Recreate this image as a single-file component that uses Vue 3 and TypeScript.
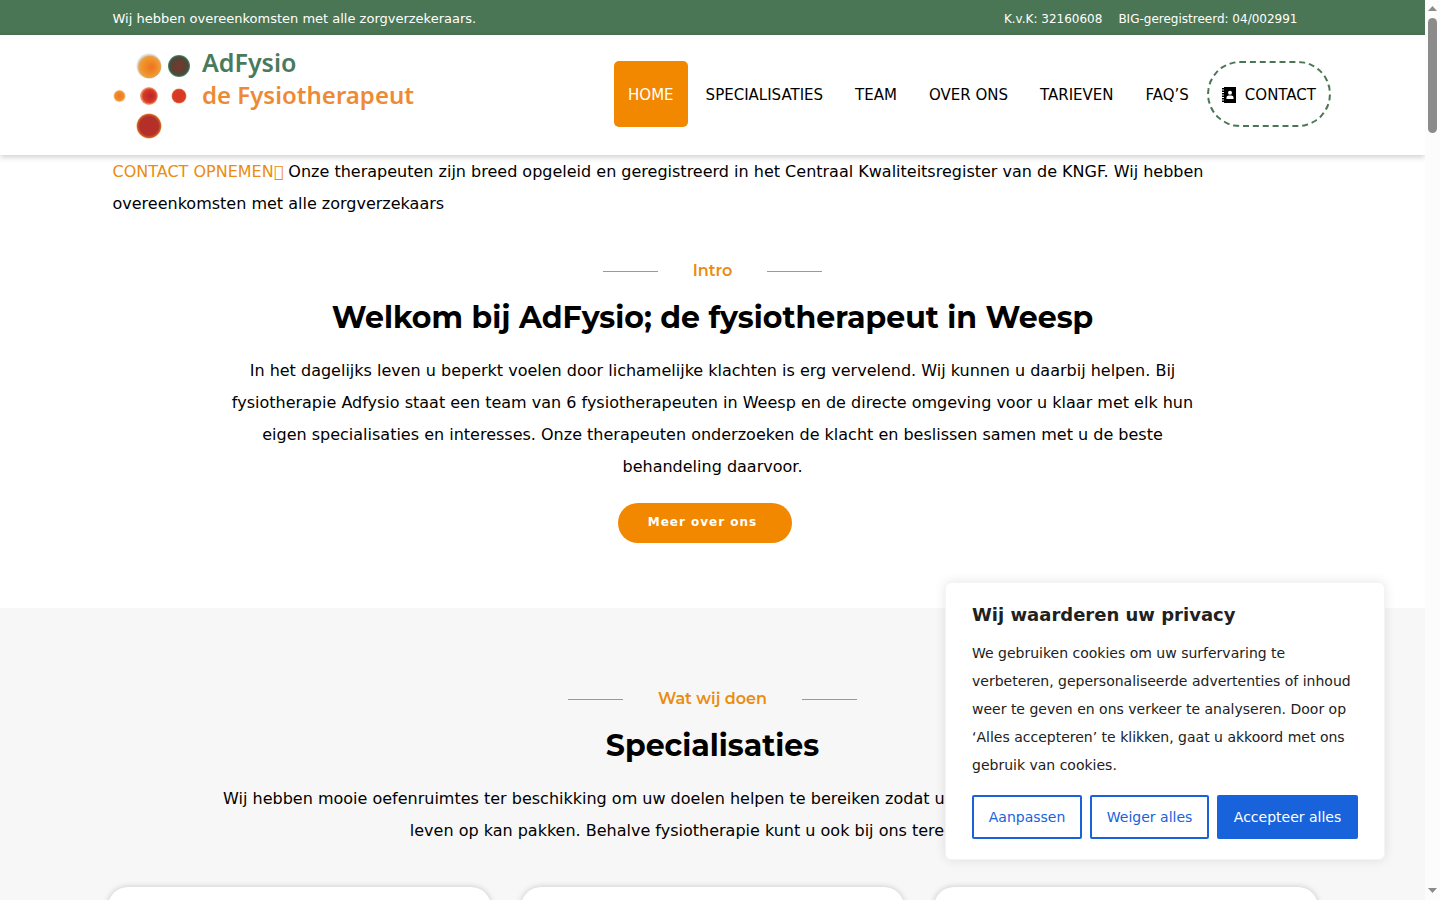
<script setup lang="ts">
interface NavItem {
  label: string
  active?: boolean
}

const navItems: NavItem[] = [
  { label: 'HOME', active: true },
  { label: 'SPECIALISATIES' },
  { label: 'TEAM' },
  { label: 'OVER ONS' },
  { label: 'TARIEVEN' },
  { label: 'FAQ’S' },
]

const cards: number[] = [1, 2, 3]
</script>

<template>
  <div class="viewport">
    <div class="page">
      <div class="topbar">
        <div class="container topbar-inner">
          <span class="agreement">Wij hebben overeenkomsten met alle zorgverzekeraars.</span>
          <div class="registrations">
            <span>K.v.K: 32160608</span>
            <span>BIG-geregistreerd: 04/002991</span>
          </div>
        </div>
      </div>

      <header class="header">
        <a class="logo" href="#" aria-label="AdFysio de Fysiotherapeut">
          <svg width="320" height="108" viewBox="0 -6 320 108">
            <defs>
              <radialGradient id="amber" cx="0.52" cy="0.54" r="0.5" fx="0.62" fy="0.55">
                <stop offset="0" stop-color="#ef7026" />
                <stop offset="0.65" stop-color="#f09428" />
                <stop offset="0.86" stop-color="#e9a04a" />
                <stop offset="1" stop-color="#dde2e0" />
              </radialGradient>
              <radialGradient id="dark">
                <stop offset="0" stop-color="#703c31" />
                <stop offset="0.55" stop-color="#633d31" />
                <stop offset="0.85" stop-color="#3f5140" />
                <stop offset="1" stop-color="#5c8b6b" />
              </radialGradient>
              <radialGradient id="small">
                <stop offset="0" stop-color="#f07820" />
                <stop offset="0.7" stop-color="#f08a27" />
                <stop offset="1" stop-color="#f6c489" />
              </radialGradient>
              <radialGradient id="red" fx="0.62">
                <stop offset="0" stop-color="#b9232b" />
                <stop offset="0.72" stop-color="#d93a25" />
                <stop offset="1" stop-color="#f3b088" />
              </radialGradient>
              <radialGradient id="scarlet">
                <stop offset="0" stop-color="#d53826" />
                <stop offset="0.82" stop-color="#d93b25" />
                <stop offset="1" stop-color="#eb8b5a" />
              </radialGradient>
              <radialGradient id="brick">
                <stop offset="0" stop-color="#b62c2a" />
                <stop offset="0.75" stop-color="#b3312a" />
                <stop offset="0.92" stop-color="#cd5a26" />
                <stop offset="1" stop-color="#eda553" />
              </radialGradient>
            </defs>
            <circle cx="37" cy="20" r="12.5" fill="url(#amber)" />
            <circle cx="67" cy="20" r="11" fill="url(#dark)" />
            <circle cx="7.500" cy="50" r="6" fill="url(#small)" />
            <circle cx="37" cy="50" r="9" fill="url(#red)" />
            <circle cx="67" cy="50" r="7.5" fill="url(#scarlet)" />
            <circle cx="37" cy="80" r="12.5" fill="url(#brick)" />
            <text class="logo-name" x="90" y="26">AdFysio</text>
            <text class="logo-sub" x="90" y="58">de Fysiotherapeut</text>
          </svg>
        </a>
        <nav class="nav">
          <a
            v-for="item in navItems"
            :key="item.label"
            href="#"
            class="nav-link"
            :class="{ active: item.active }"
          >{{ item.label }}</a>
          <a href="#" class="nav-link contact">
            <svg width="14" height="16" viewBox="0 0 14 16" aria-hidden="true">
              <path fill="#000" d="M2 0h12v16H2z" />
              <path fill="none" stroke="#000" stroke-width="2" stroke-dasharray="1.5 1" d="M1 1v15" />
              <circle cx="8" cy="5.8" r="2" fill="#fff" />
              <path fill="#fff" d="M4.5 12V10.700c0-1.500 1-2.200 2.200-2.200h2.600c1.200 0 2.200.7 2.200 2.200V12z" />
            </svg>
            <span>CONTACT</span>
          </a>
        </nav>
      </header>

      <main>
        <section class="intro">
          <p class="container lead">
            <a href="#">CONTACT OPNEMEN&#xe900;</a>
            Onze therapeuten zijn breed opgeleid en geregistreerd in het Centraal Kwaliteitsregister van de KNGF. Wij hebben overeenkomsten met alle zorgverzekaars
          </p>
          <div class="block">
            <div class="eyebrow">Intro</div>
            <h1>Welkom bij AdFysio; de fysiotherapeut in Weesp</h1>
            <p>
              In het dagelijks leven u beperkt voelen door lichamelijke klachten is erg vervelend. Wij kunnen u daarbij helpen. Bij fysiotherapie Adfysio staat een team van 6 fysiotherapeuten in Weesp en de directe omgeving voor u klaar met elk hun eigen specialisaties en interesses. Onze therapeuten onderzoeken de klacht en beslissen samen met u de beste behandeling daarvoor.
            </p>
            <a href="#" class="more">Meer over ons</a>
          </div>
        </section>

        <section class="specialties">
          <div class="block">
            <div class="eyebrow">Wat wij doen</div>
            <h2>Specialisaties</h2>
            <p>
              Wij hebben mooie oefenruimtes ter beschikking om uw doelen helpen te bereiken zodat u weer met plezier het dagelijkse<br />
              leven op kan pakken. Behalve fysiotherapie kunt u ook bij ons terecht voor:
            </p>
          </div>
          <div class="cards">
            <article v-for="card in cards" :key="card" class="card"></article>
          </div>
        </section>
      </main>

      <div class="consent" role="dialog" aria-labelledby="consent-title">
        <h3 id="consent-title">Wij waarderen uw privacy</h3>
        <p>
          We gebruiken cookies om uw surfervaring te verbeteren, gepersonaliseerde advertenties of inhoud weer te geven en ons verkeer te analyseren. Door op ‘Alles accepteren’ te klikken, gaat u akkoord met ons gebruik van cookies.
        </p>
        <div class="consent-actions">
          <button type="button">Aanpassen</button>
          <button type="button">Weiger alles</button>
          <button type="button" class="primary">Accepteer alles</button>
        </div>
      </div>
    </div>

    <div class="scrollbar" aria-hidden="true">
      <svg width="9" height="5" viewBox="0 0 9 5"><path fill="#8b8b8b" d="M0 5 4.500 0 9 5z" /></svg>
      <div class="thumb"></div>
      <svg class="down" width="9" height="5" viewBox="0 0 9 5"><path fill="#8b8b8b" d="M0 0 4.500 5 9 0z" /></svg>
    </div>
  </div>
</template>

<style>
body {
  margin: 0;
  background: #fff;
}
</style>

<style scoped>
.viewport {
  display: flex;
  height: 100vh;
  overflow: hidden;
  font-family: "DejaVu Sans", sans-serif;
  font-size: 16px;
  line-height: 32px;
  color: #000;
}

.page {
  position: relative;
  flex: 1;
  min-width: 0;
  overflow: hidden;
}

.container {
  box-sizing: border-box;
  width: 100%;
  max-width: 1200px;
  margin: 0 auto;
}

a {
  color: inherit;
  text-decoration: none;
}

h1,
h2,
h3,
p {
  margin: 0;
}

.topbar {
  padding-top: 2px;
  background: #4a7655;
  color: #fff;
  line-height: 33px;
}

.topbar-inner {
  display: flex;
  justify-content: space-between;
  padding-right: 15px;
}

.agreement {
  font-size: 13px;
}

.registrations {
  display: flex;
  gap: 16px;
  padding-top: 1px;
  margin-bottom: -1px;
  font-size: 12px;
}

.header {
  position: relative;
  z-index: 1;
  box-sizing: border-box;
  display: flex;
  align-items: center;
  justify-content: space-between;
  height: 120px;
  padding: 0 94px 2px 112px;
  background: #fff;
  box-shadow: 0 2px 6px rgba(0, 0, 0, 0.2);
}

.logo,
.logo svg {
  display: block;
}

.logo-name,
.logo-sub {
  font-family: "Noto Sans", "Open Sans", sans-serif;
  font-weight: 600;
}

.logo-name {
  font-size: 25px;
  fill: #4a7a5c;
}

.logo-sub {
  font-size: 24px;
  fill: #ee8a35;
}

.nav {
  display: flex;
  gap: 4px;
}

.nav-link {
  display: flex;
  align-items: center;
  box-sizing: border-box;
  height: 66px;
  padding: 2px 14px 0;
  border-radius: 5px;
  font-size: 15px;
  white-space: nowrap;
}

.nav-link.active {
  background: #f28800;
  color: #fff;
}

.contact {
  gap: 9px;
  padding: 2px 13px 0;
  border: 2px dashed #4a7655;
  border-radius: 35px;
}

.intro {
  padding: 1px 0 65px;
}

.lead a {
  color: #ea8c10;
}

.block {
  display: flex;
  flex-direction: column;
  align-items: center;
  max-width: 990px;
  margin: 0 auto;
  text-align: center;
}

.intro .block {
  margin-top: 35px;
}

.eyebrow {
  display: flex;
  align-items: center;
  gap: 35px;
  color: #ea8c10;
  font-family: Montserrat, Inter, sans-serif;
  font-weight: 600;
}

.eyebrow::before,
.eyebrow::after {
  content: "";
  width: 55px;
  height: 1px;
  background: #ea8c10;
}

h1,
h2 {
  margin: 11px 0 17px;
  font-family: Montserrat, Inter, sans-serif;
  font-size: 30px;
  font-weight: 700;
  line-height: 40px;
}

.more {
  margin: 20px 15px 0 0;
  padding: 0 35px 2px 30px;
  border-radius: 20px;
  background: #f28800;
  color: #fff;
  font-size: 12px;
  font-weight: 700;
  line-height: 38px;
  letter-spacing: 1px;
}

.specialties {
  padding: 75px 0 60px;
  background: #f7f7f7;
}

.cards {
  display: grid;
  grid-template-columns: repeat(3, 1fr);
  gap: 30px;
  max-width: 1210px;
  margin: 40px auto 0;
}

.card {
  min-height: 380px;
  border-radius: 20px;
  background: #fff;
  box-shadow: 0 0 6px rgba(0, 0, 0, 0.2);
}

.consent {
  position: absolute;
  right: 40px;
  bottom: 40px;
  z-index: 2;
  box-sizing: border-box;
  width: 440px;
  padding: 21px 26px 20px;
  border: 1px solid #f4f4f4;
  border-radius: 6px;
  background: #fff;
  box-shadow: 0 0 12px rgba(0, 0, 0, 0.1);
  color: #212121;
  font-size: 14px;
}

.consent h3 {
  font-size: 18px;
  line-height: 22px;
}

.consent p {
  margin: 13px 0 16px;
  line-height: 28px;
}

.consent-actions {
  display: flex;
  gap: 8px;
}

.consent button {
  flex: 1 1 auto;
  height: 44px;
  padding: 0 14px;
  border: 2px solid #1863dc;
  border-radius: 2px;
  background: #fff;
  color: #1863dc;
  font: inherit;
  white-space: nowrap;
}

.consent button.primary {
  background: #1863dc;
  color: #fff;
}

.scrollbar {
  box-sizing: border-box;
  display: flex;
  flex-direction: column;
  align-items: center;
  gap: 7px;
  width: 15px;
  padding: 6px 0 7px;
  background: #fcfcfc;
}

.thumb {
  width: 9px;
  height: 13%;
  border-radius: 5px;
  background: #8b8b8b;
}

.down {
  margin-top: auto;
}
</style>
